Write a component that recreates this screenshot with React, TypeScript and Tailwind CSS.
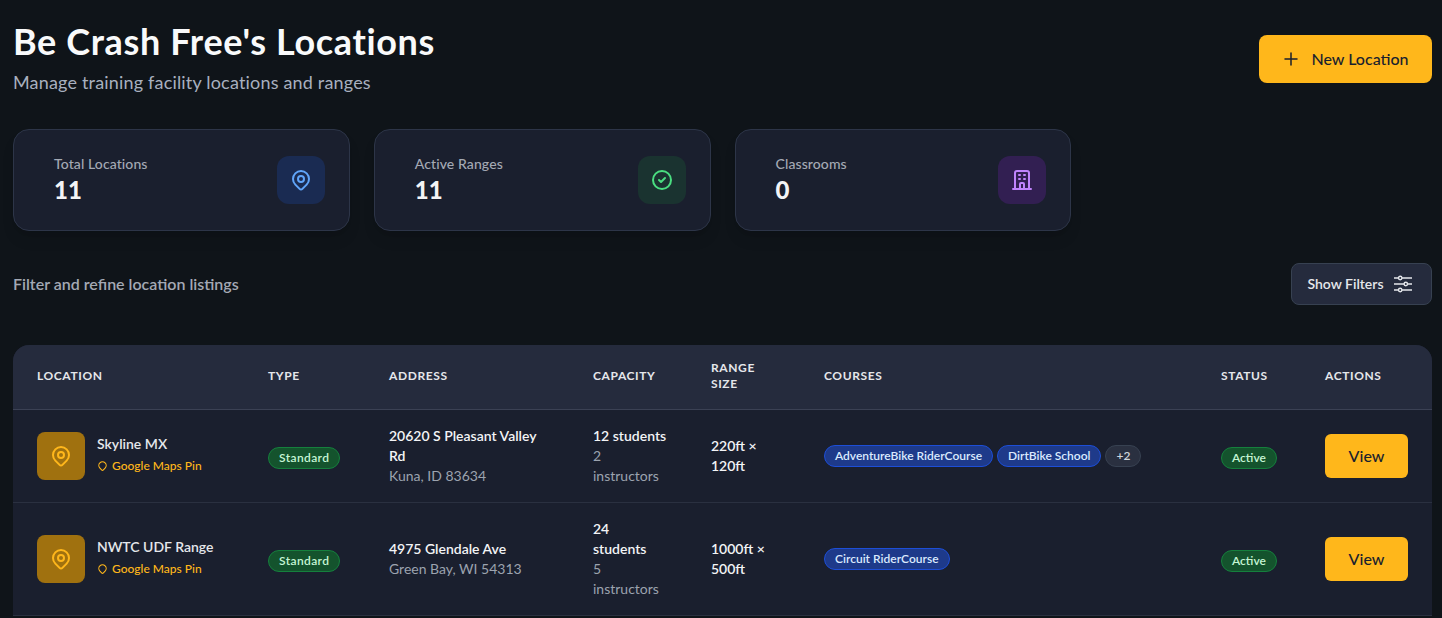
import React from "react";

const Pin = ({ className }: { className: string }) => (
  <svg className={className} viewBox="0 0 24 24" fill="none" stroke="currentColor" strokeWidth={2} strokeLinecap="round" strokeLinejoin="round">
    <path d="M17.657 16.657L13.414 20.9a1.998 1.998 0 01-2.827 0l-4.244-4.243a8 8 0 1111.314 0z" />
    <path d="M15 11a3 3 0 11-6 0 3 3 0 016 0z" />
  </svg>
);
const SmallPin = () => (
  <svg className="w-[11px] h-[12px] text-[#ffb71b]" viewBox="0 0 24 24" fill="none" stroke="currentColor" strokeWidth={2.4} strokeLinecap="round" strokeLinejoin="round">
    <path d="M17.657 16.657L13.414 20.9a1.998 1.998 0 01-2.827 0l-4.244-4.243a8 8 0 1111.314 0z" />
  </svg>
);
const Check = () => (
  <svg className="w-6 h-6 text-[#4ade80]" viewBox="0 0 24 24" fill="none" stroke="currentColor" strokeWidth={2} strokeLinecap="round" strokeLinejoin="round">
    <path d="M9 12l2 2 4-4m6 2a9 9 0 11-18 0 9 9 0 0118 0z" />
  </svg>
);
const Building = () => (
  <svg className="w-6 h-6 text-[#c084fc]" viewBox="0 0 24 24" fill="none" stroke="currentColor" strokeWidth={2} strokeLinecap="round" strokeLinejoin="round">
    <path d="M19 21V5a2 2 0 00-2-2H7a2 2 0 00-2 2v16m14 0h2m-2 0h-5m-9 0H3m2 0h5M9 7h1m-1 4h1m4-4h1m-1 4h1m-5 10v-5a1 1 0 011-1h2a1 1 0 011 1v5m-4 0h4" />
  </svg>
);
const Plus = () => (
  <svg className="w-[18px] h-[18px] text-[#1a1f2e]" viewBox="0 0 24 24" fill="none" stroke="currentColor" strokeWidth={2} strokeLinecap="round" strokeLinejoin="round">
    <path d="M12 4v16m8-8H4" />
  </svg>
);
const Sliders = () => (
  <svg className="w-[18px] h-[18px] text-[#e5e7eb]" viewBox="0 0 18 18" fill="none" stroke="currentColor" strokeWidth={1.4}>
    <path d="M0 3h4.500M8 3h10M0 9h10M13.500 9h4.500M0 15h4.500M8 15h10" />
    <circle cx="6.200" cy="3" r="1.700" />
    <circle cx="11.800" cy="9" r="1.700" />
    <circle cx="6.200" cy="15" r="1.700" />
  </svg>
);

const Stat = ({ label, value, iconBg, icon }: { label: string; value: string; iconBg: string; icon: React.ReactNode }) => (
  <div className="h-[102px] rounded-2xl border border-[#2d3548] bg-[#1a1f2e] shadow-lg pl-10 pr-6 flex items-center justify-between">
    <div>
      <div className="text-sm leading-5 text-[#a4a9b4] font-medium tracking-[0.1px]">{label}</div>
      <div className="text-2xl leading-8 font-black text-[#f3f4f6]">{value}</div>
    </div>
    <div className={`w-12 h-12 rounded-xl flex items-center justify-center ${iconBg}`}>{icon}</div>
  </div>
);

const Head = ({ children }: { children: React.ReactNode }) => (
  <th className="px-6 pb-[2px] text-left text-xs leading-4 font-bold tracking-[0.05em] text-[#e5e7eb] uppercase">{children}</th>
);
const Td = ({ children }: { children: React.ReactNode }) => <td className="px-6 py-4 align-middle">{children}</td>;

const StandardBadge = () => (
  <span className="block w-fit mt-1 rounded-full border border-[#15803d] bg-[#14532d] px-[10px] text-xs leading-5 font-semibold tracking-[0.4px] text-[#c6f6d5]">Standard</span>
);
const ActiveBadge = () => (
  <span className="block w-fit mt-1 rounded-full border border-[#15803d] bg-[#14532d] px-[10px] text-xs leading-5 font-semibold text-[#c6f6d5]">Active</span>
);
const BlueBadge = ({ children }: { children: React.ReactNode }) => (
  <span className="inline-block rounded-full border border-[#1d4ed8] bg-[#1e3a8a] px-[10px] text-xs leading-5 font-semibold text-[#dbeafe] whitespace-nowrap">{children}</span>
);

const Row = ({ name, line1, line2, students, instructors, size, courses, more }: {
  name: string; line1: React.ReactNode; line2: string; students: React.ReactNode; instructors: React.ReactNode; size: React.ReactNode; courses: string[]; more?: string;
}) => (
  <tr className="border-b border-[#2a3040]">
    <Td>
      <div className="flex items-center gap-3">
        <div className="w-12 h-12 rounded-lg bg-[#a0710f] flex items-center justify-center shrink-0">
          <Pin className="w-6 h-6 text-[#ffb71b]" />
        </div>
        <div className="mb-[3px]">
          <div className="text-sm leading-5 font-semibold text-[#e5e7eb] whitespace-nowrap">{name}</div>
          <div className="flex items-center gap-1 text-xs leading-4 mt-1 font-medium text-[#ffb71b] whitespace-nowrap"><SmallPin />Google Maps Pin</div>
        </div>
      </div>
    </Td>
    <Td><StandardBadge /></Td>
    <Td>
      <div className="text-sm leading-5 font-semibold text-[#f3f4f6]">{line1}</div>
      <div className="text-sm leading-5 text-[#9ca3af]">{line2}</div>
    </Td>
    <Td>
      <div className="text-sm leading-5 font-semibold text-[#f3f4f6]">{students}</div>
      <div className="text-sm leading-5 text-[#9ca3af]">{instructors}</div>
    </Td>
    <Td><div className="text-sm leading-5 font-semibold text-[#f3f4f6]">{size}</div></Td>
    <Td>
      <div className="flex items-center gap-1">
        {courses.map((c) => <BlueBadge key={c}>{c}</BlueBadge>)}
        {more && <span className="inline-block rounded-full border border-[#374151] bg-[#2a3040] px-[10px] text-xs leading-5 font-semibold text-[#d1d5db]">{more}</span>}
      </div>
    </Td>
    <Td><ActiveBadge /></Td>
    <Td>
      <button className="w-[83px] h-11 rounded-md bg-[#ffb71b] text-base font-medium text-[#1a1f2e]">View</button>
    </Td>
  </tr>
);

export default function App() {
  return (
    <div className="h-screen overflow-hidden bg-[#0f1419] pl-[13px] pr-[10px] pt-[18px] font-['Lato',sans-serif]">
      <div className="flex items-start justify-between">
        <div>
          <h1 className="text-4xl leading-[46px] font-bold tracking-[0.64px] text-[#f9fafb]">Be Crash Free's Locations</h1>
          <p className="mt-1 text-lg leading-7 tracking-[0.18px] text-[#a8b0bf]">Manage training facility locations and ranges</p>
        </div>
        <button className="mt-[17px] h-12 w-[173px] rounded-lg bg-[#ffb71b] flex items-center justify-center gap-[11px] text-base font-medium text-[#1a1f2e]">
          <Plus />New Location
        </button>
      </div>

      <div className="mt-[33px] grid grid-cols-4 gap-6">
        <Stat label="Total Locations" value="11" iconBg="bg-[#1a2b52]" icon={<Pin className="w-6 h-6 text-[#60a5fa]" />} />
        <Stat label="Active Ranges" value="11" iconBg="bg-[#1a3330]" icon={<Check />} />
        <Stat label="Classrooms" value="0" iconBg="bg-[#321f52]" icon={<Building />} />
      </div>

      <div className="mt-8 flex items-center justify-between">
        <div className="text-base font-semibold text-[#a4a9b4]">Filter and refine location listings</div>
        <button className="h-[42px] w-[141px] pr-1 rounded-lg border border-[#374151] bg-[#252b3d] flex items-center justify-center gap-[10px] text-sm font-semibold text-[#e5e7eb]">
          Show Filters<Sliders />
        </button>
      </div>

      <div className="mt-10 rounded-t-2xl overflow-hidden bg-[#1a1f2e]">
        <table className="w-full table-fixed border-collapse">
          <colgroup>
            <col className="w-[231px]" /><col className="w-[121px]" /><col className="w-[204px]" /><col className="w-[118px]" />
            <col className="w-[113px]" /><col className="w-[397px]" /><col className="w-[104px]" /><col className="w-[131px]" />
          </colgroup>
          <thead>
            <tr className="h-[64px] bg-[#252b3d] border-b border-[#3b4154]">
              <Head>Location</Head><Head>Type</Head><Head>Address</Head><Head>Capacity</Head>
              <Head>Range Size</Head><Head>Courses</Head><Head>Status</Head><Head>Actions</Head>
            </tr>
          </thead>
          <tbody>
            <Row name="Skyline MX" line1="20620 S Pleasant Valley Rd" line2="Kuna, ID 83634" students={<span className="whitespace-nowrap">12 students</span>} instructors="2 instructors" size="220ft × 120ft" courses={["AdventureBike RiderCourse", "DirtBike School"]} more="+2" />
            <Row name="NWTC UDF Range" line1="4975 Glendale Ave" line2="Green Bay, WI 54313" students="24 students" instructors="5 instructors" size="1000ft × 500ft" courses={["Circuit RiderCourse"]} />
          </tbody>
        </table>
      </div>
    </div>
  );
}
